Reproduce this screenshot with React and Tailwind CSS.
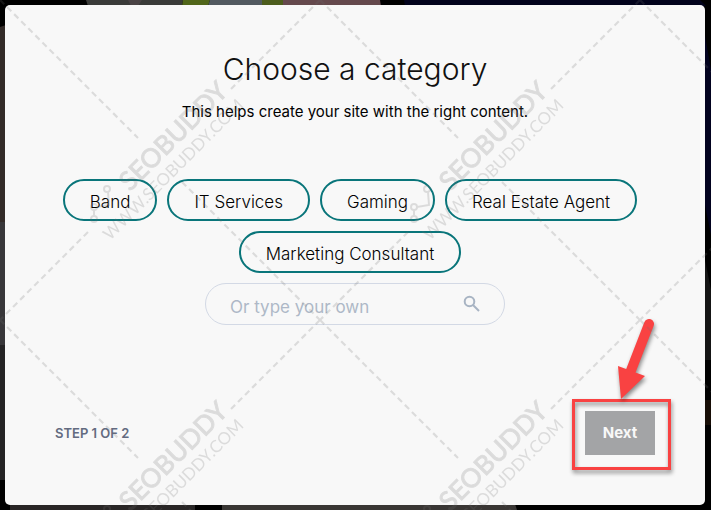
const categories = ["Band", "IT Services", "Gaming", "Real Estate Agent", "Marketing Consultant"];

function Backdrop() {
  return (
    <svg className="absolute inset-0 h-full w-full" viewBox="0 0 711 510" preserveAspectRatio="none" aria-hidden="true">
      <rect width="711" height="510" fill="#000" />
      <path d="M0 27 6 25V222H0Z" fill="#332b28" />
      <path d="M0 222H6V345H0Z" fill="#38373a" />
      <path d="M0 345H6V480H0Z" fill="#252425" />
      <path d="M86 0H183L182 6H88Z" fill="#3a3b39" />
      <path d="M128 0H142L138 6H131Z" fill="#4a4345" />
      <path d="M183 0H210L208 6H182Z" fill="#51661a" />
      <path d="M210 0H262V6H208Z" fill="#525a60" />
      <path d="M262 0H283V6H262Z" fill="#4d5d1d" />
      <path d="M283 0H380L381 6H283Z" fill="#65494d" />
      <path d="M404 0H700L706 6H405Z" fill="#02031c" />
      <path d="M704 30 711 70V235L704 200Z" fill="#02021f" />
      <path d="M704 255 711 290V360H704Z" fill="#151515" />
      <path d="M704 400H711V425H704Z" fill="#170d06" />
      <path d="M10 504H195V510H10Z" fill="#292626" />
      <path d="M195 504H222V510H197Z" fill="#000" />
      <path d="M222 504H515L517 510H222Z" fill="#393634" />
    </svg>
  );
}

function Watermark() {
  return (
    <svg className="pointer-events-none absolute inset-0 h-full w-full opacity-20" aria-hidden="true">
      <defs>
        <pattern id="mark" width="320" height="320" patternUnits="userSpaceOnUse">
          <g fill="none" stroke="#6e6e6e" strokeWidth="2.2">
            <path d="M0 0 138 138M182 182 320 320M320 0 231 89M88 232 0 320" strokeDasharray="6 4" />
            <g strokeWidth="2">
              <circle cx="107" cy="189" r="3" />
              <circle cx="94" cy="207" r="3" />
              <circle cx="94" cy="219" r="3" />
              <path d="M108 192 109 205 97 207M94 210V216" />
            </g>
          </g>
          <g fill="#6e6e6e">
            <text transform="translate(130 192) rotate(-45)" stroke="#6e6e6e" strokeWidth="1" className="font-[Lato] text-[26px]">SEOBUDDY</text>
            <text transform="translate(110 241) rotate(-45)" className="font-[Lato] text-[17px]">WWW.SEOBUDDY.COM</text>
          </g>
        </pattern>
      </defs>
      <rect width="100%" height="100%" fill="url(#mark)" />
    </svg>
  );
}

function Arrow() {
  return (
    <svg className="absolute -right-4 bottom-full h-[90px] w-[60px] overflow-visible drop-shadow-[1px_3px_2px_rgba(0,0,0,0.45)]" viewBox="611 321 60 90" aria-hidden="true">
      <path d="M649 324 630 373" stroke="#f94242" strokeWidth="10" strokeLinecap="round" />
      <path d="M618 366 645 376 621 399Z" fill="#f94242" />
    </svg>
  );
}

export default function App() {
  return (
    <div className="relative flex min-h-screen bg-black p-[5px] pr-[6px] font-[Inter,sans-serif]">
      <Backdrop />
      <main className="relative flex flex-1 flex-col rounded-[5px] bg-[#f8f8f8] px-[50px] pt-11 pb-[50px] text-[#111]">
        <h1 className="text-center text-[30px] leading-10 font-light">Choose a category</h1>
        <p className="mt-[11px] text-center text-[15px] leading-6 text-black">This helps create your site with the right content.</p>
        <div className="mt-[55px] flex flex-wrap justify-center gap-y-[10px]">
          {categories.map((name) => (
            <button key={name} type="button" className="mr-[10px] h-[42px] rounded-full border-2 border-[#09757a] px-[25px] pt-[5px] text-[17px] font-light text-black">
              {name}
            </button>
          ))}
        </div>
        <div className="relative mx-auto mt-[10px] w-[300px]">
          <input aria-label="Or type your own" placeholder="Or type your own" className="h-[42px] w-full rounded-full border border-[#d3d9e5] bg-transparent pt-[6px] pr-14 pl-6 text-[17px] outline-none placeholder:text-[#aeb8c7]" />
          <svg className="absolute top-3 right-6 h-[18px] w-[18px]" viewBox="0 0 18 18" fill="none" stroke="#a8b4c3" strokeWidth="2" aria-hidden="true">
            <circle cx="6.5" cy="6.5" r="4.8" />
            <path d="M10 10 16 16" />
          </svg>
        </div>
        <footer className="mt-auto flex items-center justify-between">
          <p className="text-[13px] leading-5 font-semibold text-[#636b80]">STEP 1 OF 2</p>
          <div className="relative">
            <button type="button" className="block h-11 w-[70px] bg-[#a3a4a6] text-[15px] font-bold text-[#f8f8f8]">Next</button>
            <div className="pointer-events-none absolute -top-3 -right-4 -bottom-[15px] -left-[13px] border-3 border-[#f94242] drop-shadow-[1px_3px_2px_rgba(0,0,0,0.45)]" />
            <Arrow />
          </div>
        </footer>
      </main>
      <Watermark />
    </div>
  );
}
